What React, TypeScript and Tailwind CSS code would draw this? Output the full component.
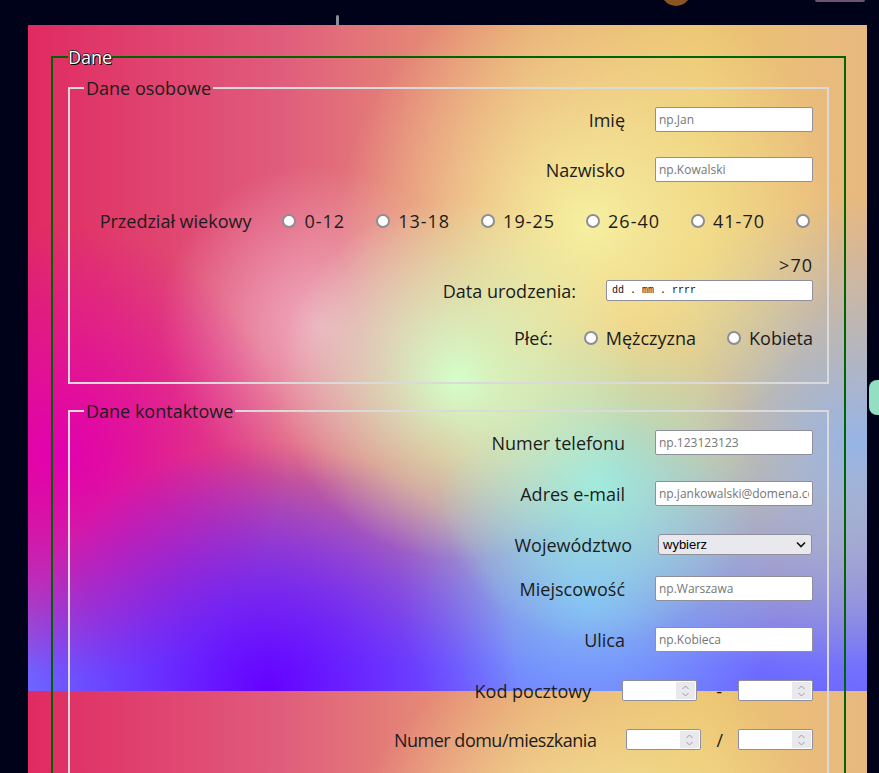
import React from "react";

const labelCls = "text-[18px] leading-[24px] text-[#1c1c1c] whitespace-nowrap";

function TextInput({ placeholder }: { placeholder: string }) {
  return (
    <input
      type="text"
      placeholder={placeholder}
      className="w-[158px] h-[25px] bg-white border border-[#8f8f9d] rounded-[2px] px-[3px] text-[12px] text-[#1c1c1c] placeholder:text-[#767676] font-['Open_Sans'] outline-none"
    />
  );
}

function NumberBox({ width }: { width: string }) {
  return (
    <div className={`${width} h-[21px] bg-white border border-[#8f8f9d] rounded-[2px] flex justify-end items-stretch p-[1px]`}>
      <div className="w-[19px] bg-[#e9e9ed] flex flex-col items-center justify-center">
        <svg width="9" height="14" viewBox="0 0 9 14" fill="none" stroke="#9a9aa2" strokeWidth="1">
          <path d="M1.5 5 L4.5 2 L7.5 5" />
          <path d="M1.5 9 L4.5 12 L7.5 9" />
        </svg>
      </div>
    </div>
  );
}

function Radio({ label, last, wide }: { label?: string; last?: boolean; wide?: boolean }) {
  return (
    <span className={`flex items-center ${last ? "" : "mr-[31px]"}`}>
      <span className="w-[14px] h-[14px] rounded-full border-2 border-[#8d8d96] bg-white" />
      {label && <span className={`${labelCls} ml-[8px] ${wide ? "tracking-[1px]" : ""}`}>{label}</span>}
    </span>
  );
}

export default function App() {
  return (
    <div className="relative min-h-screen bg-[#00021a] pt-[25px] overflow-hidden font-['Open_Sans']">
      {/* decorative shapes behind the form */}
      <div className="absolute left-[336px] top-[15px] w-[3px] h-[10px] bg-[#8a8c98] rounded-t-full" />
      <div className="absolute left-[661px] top-[-10px] w-[30px] h-[16px] bg-[#8a5523] rounded-b-full" />
      <div className="absolute left-[815px] top-[-2px] w-[50px] h-[4px] bg-[#6d5472] rounded-full" />
      <div className="absolute left-[869px] top-[380px] w-[20px] h-[35px] bg-[#93dfc2] rounded-l-[8px]" />

      <div className="relative ml-[28px] w-[839px] pt-[21px] pl-[23px] pr-[21px] pb-10 bg-[length:100%_666px] bg-repeat bg-[image:radial-gradient(circle_at_430px_355px,rgba(212,255,202,1)_0px,rgba(212,255,202,0)_180px),radial-gradient(circle_at_240px_665px,rgba(102,0,255,1)_0px,rgba(102,0,255,0)_250px),radial-gradient(circle_at_30px_430px,rgba(226,0,176,1)_0px,rgba(226,0,176,0)_230px),radial-gradient(circle_at_570px_460px,rgba(160,235,222,1)_0px,rgba(160,235,222,0)_160px),radial-gradient(circle_at_560px_570px,rgba(125,185,250,1)_0px,rgba(125,185,250,0)_190px),radial-gradient(circle_at_560px_200px,rgba(246,240,160,1)_0px,rgba(246,240,160,0)_250px),radial-gradient(circle_at_290px_300px,rgba(240,170,190,1)_0px,rgba(240,170,190,0)_160px),radial-gradient(circle_at_830px_420px,rgba(150,180,230,1)_0px,rgba(150,180,230,0)_250px),linear-gradient(180deg,rgba(110,108,255,0)_0px,rgba(110,108,255,0)_430px,rgba(110,105,255,1)_640px),linear-gradient(90deg,#e02a62_0%,#e05c7c_30%,#e8a872_60%,#ecc470_80%,#e8b880_100%)]">
        <fieldset className="border-2 border-[#006400] px-[15px] pt-[9px] pb-6">
          <legend className="text-[18px] leading-[22px] text-white [text-shadow:1px_1px_0_#000,-1px_0_0_#222,0_-1px_0_#333]">
            Dane
          </legend>

          <fieldset className="border-2 border-[#dadada] pl-[14px] pr-[14px] pt-[8px] pb-[32px]">
            <legend className="px-[2px] text-[18px] leading-[22px] text-[#1c1c1c]">Dane osobowe</legend>

            <div className="flex justify-end items-center h-[25px]">
              <span className={`${labelCls} mr-[30px]`}>Imię</span>
              <TextInput placeholder="np.Jan" />
            </div>
            <div className="flex justify-end items-center h-[25px] mt-[25px]">
              <span className={`${labelCls} mr-[30px]`}>Nazwisko</span>
              <TextInput placeholder="np.Kowalski" />
            </div>
            <div className="flex justify-end items-center h-[25px] mt-[26px] pr-[3px]">
              <span className={`${labelCls} mr-[31px]`}>Przedział wiekowy</span>
              <Radio label="0-12" wide />
              <Radio label="13-18" wide />
              <Radio label="19-25" wide />
              <Radio label="26-40" wide />
              <Radio label="41-70" wide />
              <Radio last />
            </div>
            <div className="flex justify-end items-center h-[20px] mt-[22px]">
              <span className={`${labelCls} tracking-[1px]`}>&gt;70</span>
            </div>
            <div className="flex justify-end items-center h-[21px] mt-[5px]">
              <span className={`${labelCls} mr-[30px]`}>Data urodzenia:</span>
              <div className="w-[207px] h-[21px] bg-white border border-[#8f8f9d] rounded-[2px] pl-[5px] flex items-center font-['Liberation_Mono'] text-[10px] text-[#111]">
                dd . mm . rrrr
              </div>
            </div>
            <div className="flex justify-end items-center h-[24px] mt-[25px]">
              <span className={`${labelCls} mr-[31px]`}>Płeć:</span>
              <Radio label="Mężczyzna" />
              <Radio label="Kobieta" last />
            </div>
          </fieldset>

          <fieldset className="mt-[16px] border-2 border-[#dadada] pl-[14px] pr-[14px] pt-[8px] pb-[32px]">
            <legend className="px-[2px] text-[18px] leading-[22px] text-[#1c1c1c]">Dane kontaktowe</legend>

            <div className="flex justify-end items-center h-[25px]">
              <span className={`${labelCls} mr-[30px]`}>Numer telefonu</span>
              <TextInput placeholder="np.123123123" />
            </div>
            <div className="flex justify-end items-center h-[25px] mt-[26px]">
              <span className={`${labelCls} mr-[30px]`}>Adres e-mail</span>
              <TextInput placeholder="np.jankowalski@domena.com" />
            </div>
            <div className="flex justify-end items-center h-[21px] mt-[28px]">
              <span className={`${labelCls} mr-[26px]`}>Województwo</span>
              <div className="w-[154px] h-[21px] mr-[1px] bg-[#e9e9ed] border border-[#8f8f9d] rounded-[3px] pl-[4px] pr-[5px] flex items-center justify-between font-['Liberation_Sans'] text-[13px] text-black">
                <span>wybierz</span>
                <svg width="10" height="7" viewBox="0 0 10 7" fill="none" stroke="#111" strokeWidth="1.6">
                  <path d="M1 1.5 L5 5.5 L9 1.5" />
                </svg>
              </div>
            </div>
            <div className="flex justify-end items-center h-[25px] mt-[21px]">
              <span className={`${labelCls} mr-[30px]`}>Miejscowość</span>
              <TextInput placeholder="np.Warszawa" />
            </div>
            <div className="flex justify-end items-center h-[25px] mt-[26px]">
              <span className={`${labelCls} mr-[30px]`}>Ulica</span>
              <TextInput placeholder="np.Kobieca" />
            </div>
            <div className="flex justify-end items-center h-[21px] mt-[28px]">
              <span className={`${labelCls} mr-[31px]`}>Kod pocztowy</span>
              <NumberBox width="w-[75px]" />
              <span className={`${labelCls} ml-[19px] mr-[16px]`}>-</span>
              <NumberBox width="w-[75px]" />
            </div>
            <div className="flex justify-end items-center h-[21px] mt-[28px]">
              <span className={`${labelCls} mr-[30px] tracking-[-0.5px]`}>Numer domu/mieszkania</span>
              <NumberBox width="w-[75px]" />
              <span className={`${labelCls} mx-[15px]`}>/</span>
              <NumberBox width="w-[75px]" />
            </div>
          </fieldset>
        </fieldset>
      </div>
    </div>
  );
}
